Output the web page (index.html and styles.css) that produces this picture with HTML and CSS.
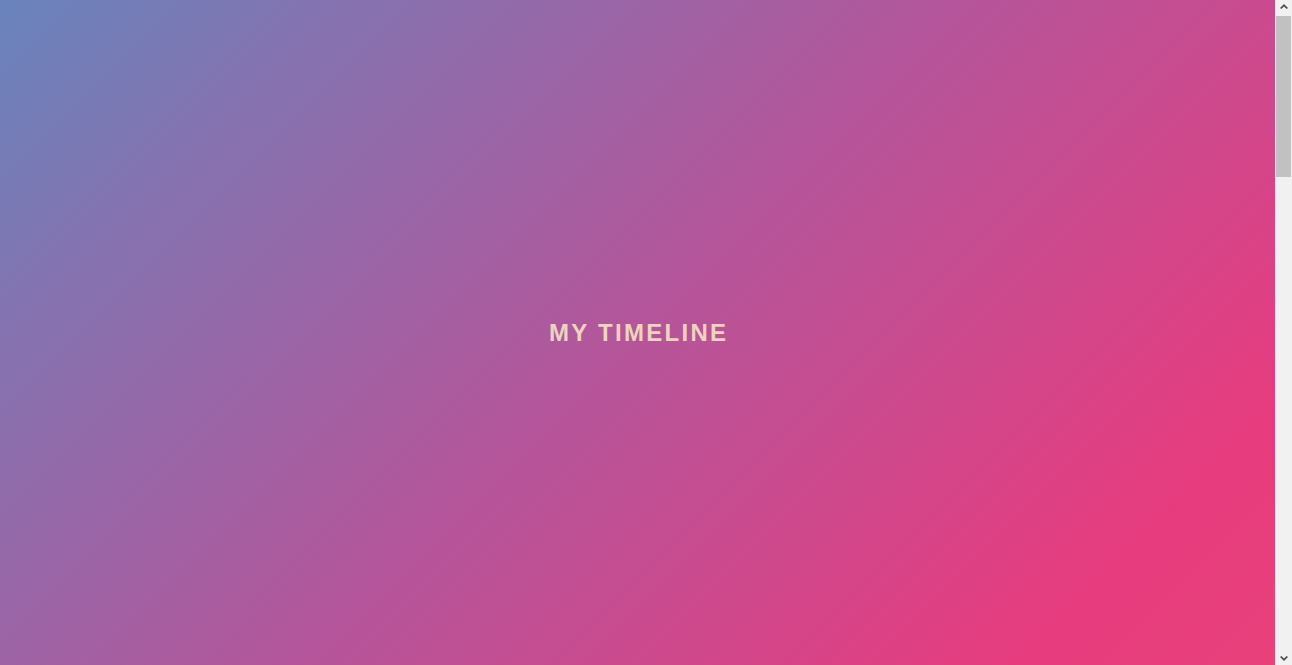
FILE: index.html
```html
<!DOCTYPE html>
<html lang="en">
<head>
<meta charset="utf-8">
<title>My Timeline</title>
<link rel="stylesheet" href="styles.css">
</head>
<body>
<div class="window">
  <div class="page">
    <header class="hero">
      <h1 class="hero-title">MY TIMELINE</h1>
    </header>
    <main class="timeline"></main>
  </div>
  <div class="scrollbar" aria-hidden="true">
    <div class="sb-button">
      <svg width="8" height="5" viewBox="0 0 8 5"><path d="M0 4 L4 0 L8 4 L6.6 5 L4 2.4 L1.4 5 Z" fill="#505050"/></svg>
    </div>
    <div class="sb-track">
      <div class="sb-thumb"></div>
    </div>
    <div class="sb-button sb-down">
      <svg width="8" height="5" viewBox="0 0 8 5"><path d="M0 1 L4 5 L8 1 L6.6 0 L4 2.6 L1.4 0 Z" fill="#505050"/></svg>
    </div>
  </div>
</div>
</body>
</html>
```
FILE: styles.css
```css
html, body {
  margin: 0;
  padding: 0;
  height: 100%;
  overflow: hidden;
}
body {
  font-family: "Liberation Sans", Arial, sans-serif;
  background: #f1f1f1;
}
.window {
  display: flex;
  height: 100vh;
}
.page {
  flex: 1;
  overflow: hidden;
}
.hero {
  height: 100vh;
  display: flex;
  align-items: center;
  justify-content: center;
  background: linear-gradient(135deg, #6a83bc 0%, #b5559a 50%, #e73c7e 87%, #e8417a 100%);
}
.hero-title {
  margin: 0;
  padding-left: 2.3px;
  font-size: 24px;
  font-weight: bold;
  letter-spacing: 2.3px;
  color: #edd4bd;
  line-height: 1;
}
.timeline {
  height: 1965px;
}
.scrollbar {
  width: 17px;
  flex: none;
  display: flex;
  flex-direction: column;
  background: #f1f1f1;
}
.sb-button {
  height: 15px;
  display: flex;
  align-items: center;
  justify-content: center;
}
.sb-button svg {
  display: block;
  margin-top: -2px;
}
.sb-down svg {
  margin-top: 2px;
}
.sb-track {
  flex: 1;
  padding: 1px 1px 0 1px;
}
.sb-thumb {
  height: 161px;
  background: #c1c1c1;
}
```
